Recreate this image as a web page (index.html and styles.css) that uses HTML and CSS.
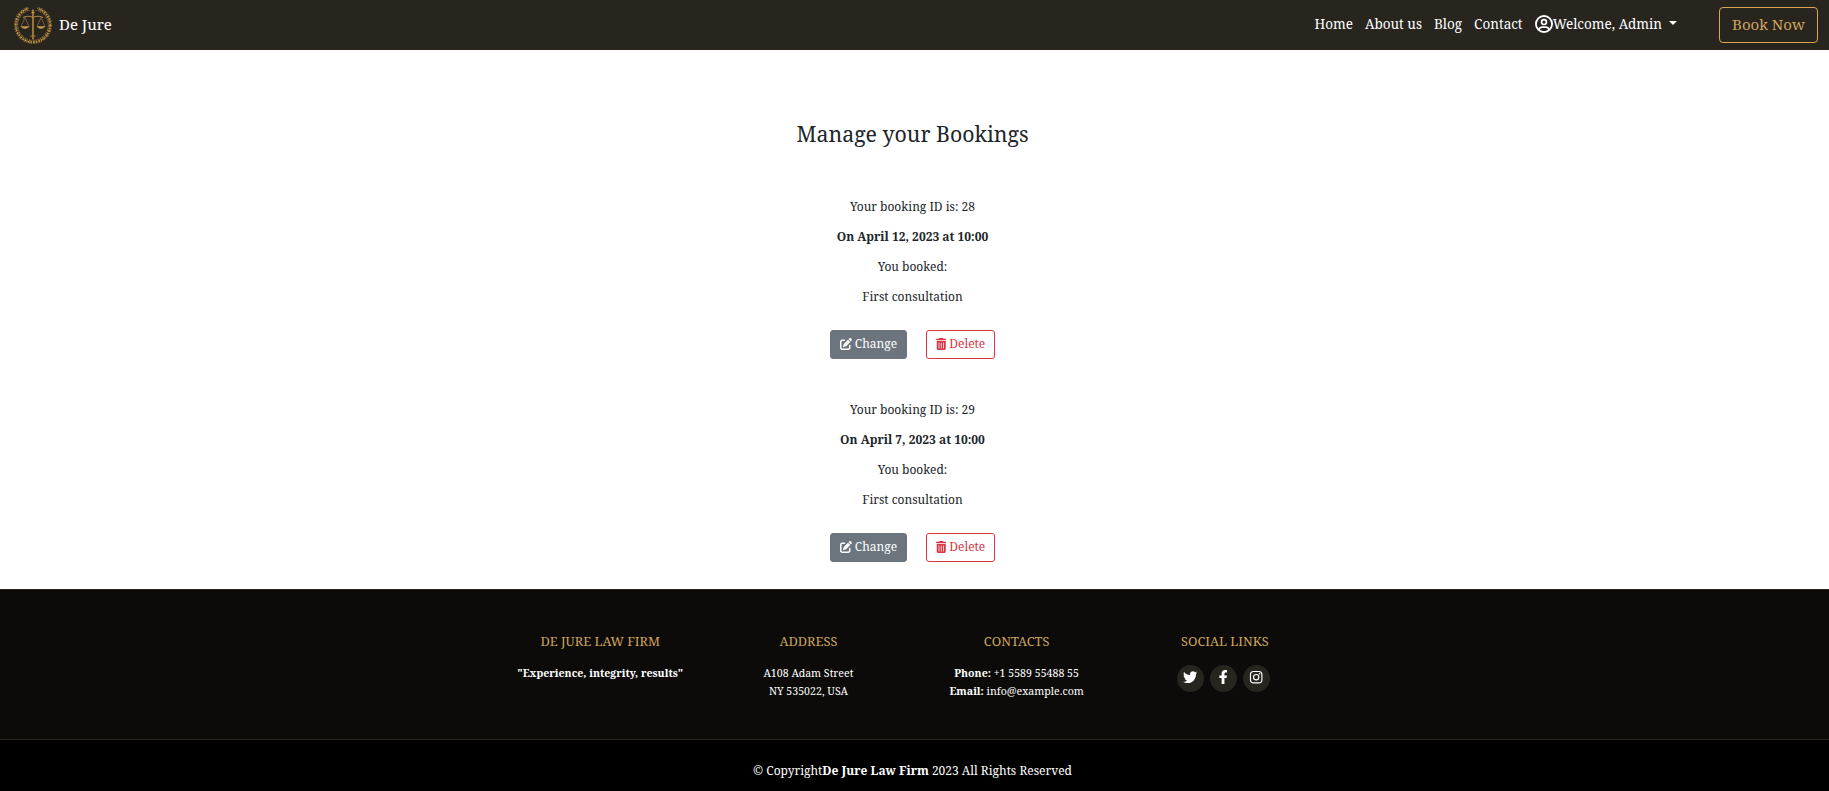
FILE: index.html
```html
<!DOCTYPE html>
<html lang="en">
<head>
<meta charset="utf-8">
<title>De Jure</title>
<link rel="stylesheet" href="styles.css">
</head>
<body>
<svg class="defs" width="0" height="0">
  <symbol id="edit" viewBox="0 0 512 512"><path d="M471.6 21.7c-21.9-21.9-57.3-21.9-79.2 0L362.3 51.7l97.9 97.9 30.1-30.1c21.9-21.9 21.9-57.3 0-79.2L471.6 21.7zm-299.2 220c-6.100 6.100-10.800 13.600-13.500 21.900l-29.600 88.800c-2.900 8.600-.6 18.100 5.800 24.600s15.900 8.700 24.600 5.800l88.800-29.600c8.200-2.700 15.700-7.400 21.900-13.500L437.700 172.300 339.700 74.300 172.400 241.700zM96 64C43 64 0 107 0 160V416c0 53 43 96 96 96H352c53 0 96-43 96-96V320c0-17.700-14.300-32-32-32s-32 14.300-32 32v96c0 17.700-14.300 32-32 32H96c-17.700 0-32-14.300-32-32V160c0-17.700 14.300-32 32-32h96c17.700 0 32-14.300 32-32s-14.300-32-32-32H96z"/></symbol>
  <symbol id="trash" viewBox="0 0 448 512"><path d="M135.2 17.700C140.600 6.800 151.700 0 163.800 0H284.200c12.100 0 23.200 6.800 28.600 17.700L320 32h96c17.700 0 32 14.300 32 32s-14.300 32-32 32H32C14.300 96 0 81.700 0 64S14.300 32 32 32h96l7.200-14.300zM32 128H416V448c0 35.300-28.700 64-64 64H96c-35.300 0-64-28.700-64-64V128zm96 64c-8.800 0-16 7.200-16 16V432c0 8.800 7.200 16 16 16s16-7.200 16-16V208c0-8.800-7.200-16-16-16zm96 0c-8.800 0-16 7.200-16 16V432c0 8.800 7.200 16 16 16s16-7.200 16-16V208c0-8.800-7.200-16-16-16zm96 0c-8.800 0-16 7.200-16 16V432c0 8.800 7.200 16 16 16s16-7.200 16-16V208c0-8.800-7.200-16-16-16z"/></symbol>
</svg>

<header class="navbar">
  <a class="brand">
    <svg class="logo" viewBox="0 0 40 40" fill="none" stroke="#a98243">
      <circle cx="20" cy="20" r="16.900" stroke-width="4.200" stroke-dasharray="2.200 1 1.200 .6" stroke="#80632f" pathLength="110"/>
      <circle cx="20" cy="20" r="17.200" stroke-width="1.200" stroke-dasharray="1.500 1.300" stroke="#c99f52"/>
      <path d="M15.500 0h9v5h-9z" fill="#28251f" stroke="none"/>
      <path d="M20 4.500v30M18.500 7.500h3" stroke-width="1.500" stroke="#c08f3f"/>
      <path d="M10 12.500q5-2.500 10 0q5-2.500 10 0M17.500 31h5" stroke-width="1.100"/>
      <path d="M12 12.500l-4 9h8zM28 12.500l-4 9h8z" stroke-width=".6"/>
      <path d="M7.500 21.500h9q-4.500 4.500-9 0zM23.500 21.500h9q-4.500 4.500-9 0z" fill="#c79a4b" stroke="none"/>
    </svg>
    <span>De Jure</span>
  </a>
  <nav class="links">
    <a>Home</a><a>About us</a><a>Blog</a><a>Contact</a>
    <a class="user"><svg class="usericon" viewBox="0 0 24 24"><path fill="#fff" fill-rule="evenodd" d="M12 0a12 12 0 1 0 0 24a12 12 0 0 0 0-24zM12 2.600a9.400 9.400 0 0 1 7.200 15.400c-.9-2-2.600-3-4.700-3h-5c-2.100 0-3.800 1-4.700 3A9.400 9.400 0 0 1 12 2.600zM12 21.400c-2 0-3.900-.6-5.400-1.700c.2-1.400 1.300-2.400 2.900-2.400h5c1.600 0 2.700 1 2.900 2.400c-1.500 1.100-3.400 1.700-5.400 1.700zM12 5a4.400 4.400 0 1 0 0 8.800a4.400 4.400 0 0 0 0-8.800zM12 7.300a2.100 2.100 0 1 1 0 4.200a2.100 2.100 0 0 1 0-4.200z"/></svg>Welcome, Admin<i class="caret"></i></a>
  </nav>
  <a class="book">Book Now</a>
</header>

<main>
  <h1>Manage your Bookings</h1>
  <section class="booking">
    <p>Your booking ID is: 28</p>
    <p><b>On April 12, 2023 at 10:00</b></p>
    <p>You booked:</p>
    <p>First consultation</p>
    <div class="actions">
      <a class="btn change"><svg class="i-edit"><use href="#edit"/></svg>Change</a>
      <a class="btn delete"><svg class="i-trash"><use href="#trash"/></svg>Delete</a>
    </div>
  </section>
  <section class="booking">
    <p>Your booking ID is: 29</p>
    <p><b>On April 7, 2023 at 10:00</b></p>
    <p>You booked:</p>
    <p>First consultation</p>
    <div class="actions">
      <a class="btn change"><svg class="i-edit"><use href="#edit"/></svg>Change</a>
      <a class="btn delete"><svg class="i-trash"><use href="#trash"/></svg>Delete</a>
    </div>
  </section>
</main>

<footer>
  <div class="columns">
    <div><h4>DE JURE LAW FIRM</h4><p><b>"Experience, integrity, results"</b></p></div>
    <div><h4>ADDRESS</h4><p>A108 Adam Street<br>NY 535022, USA</p></div>
    <div><h4>CONTACTS</h4><p><b>Phone:</b> +1 5589 55488 55<br><b>Email:</b> info@example.com</p></div>
    <div><h4>SOCIAL LINKS</h4>
      <div class="social">
        <a><svg viewBox="0 0 512 512"><path d="M459.370 151.716c.325 4.548.325 9.097.325 13.645 0 138.720-105.583 298.558-298.558 298.558-59.452 0-114.680-17.219-161.137-47.106 8.447.974 16.568 1.299 25.340 1.299 49.055 0 94.213-16.568 130.274-44.832-46.132-.975-84.792-31.188-98.112-72.772 6.498.974 12.995 1.624 19.818 1.624 9.421 0 18.843-1.300 27.614-3.573-48.081-9.747-84.143-51.980-84.143-102.985v-1.299c13.969 7.797 30.214 12.670 47.431 13.319-28.264-18.843-46.781-51.005-46.781-87.391 0-19.492 5.197-37.360 14.294-52.954 51.655 63.675 129.300 105.258 216.365 109.807-1.624-7.797-2.599-15.918-2.599-24.040 0-57.828 46.782-104.934 104.934-104.934 30.213 0 57.502 12.670 76.670 33.137 23.715-4.548 46.456-13.320 66.599-25.340-7.798 24.366-24.366 44.833-46.132 57.827 21.117-2.273 41.584-8.122 60.426-16.243-14.292 20.791-32.161 39.308-52.628 54.253z"/></svg></a>
        <a><svg viewBox="0 0 320 512"><path d="M279.140 288l14.220-92.660h-88.910v-60.130c0-25.350 12.420-50.060 52.240-50.060h40.420V6.260S260.430 0 225.360 0c-73.220 0-121.080 44.380-121.080 124.720v70.620H22.890V288h81.390v224h100.170V288z"/></svg></a>
        <a><svg class="i-insta" viewBox="0 0 448 512"><path fill-rule="evenodd" d="M130 32h188A130 130 0 0 1 448 162v188a130 130 0 0 1-130 130H130A130 130 0 0 1 0 350V162A130 130 0 0 1 130 32zm4 41a92 92 0 0 0-92 92v182a92 92 0 0 0 92 92h180a92 92 0 0 0 92-92V165a92 92 0 0 0-92-92zM224 141a115 115 0 1 1 0 230a115 115 0 0 1 0-230zm0 40a75 75 0 1 0 0 150a75 75 0 0 0 0-150zM343.500 109.500a27 27 0 1 1 0 54a27 27 0 0 1 0-54z"/></svg></a>
      </div>
    </div>
  </div>
  <div class="copyright">© Copyright<b>De Jure Law Firm</b> 2023 All Rights Reserved</div>
</footer>
</body>
</html>
```

FILE: styles.css
```css
* { box-sizing: border-box; }
body { margin: 0; font: 12px/18px "Noto Serif", "DejaVu Serif Condensed", serif; color: #212529; background: #fff; }
h1, h4, p { margin: 0; }
.defs { display: block; position: absolute; }
.navbar { height: 50px; background: #28251f; color: #fff; display: flex; align-items: center; padding: 0 11px 0 13px; }
.brand { display: flex; align-items: center; gap: 6px; font-size: 15px; margin-right: auto; }
.logo { width: 40px; height: 40px; }
.brand span { padding-bottom: 2px; }
.links { display: flex; gap: 12px; font-size: 13.5px; padding-bottom: 2px; margin-right: 42px; }
.user { display: flex; align-items: center; }
.usericon { width: 18px; height: 18px; margin-top: -1px; }
.caret { margin: -3px 0 0 7px; border: 4px solid transparent; border-top-color: #fff; border-bottom: 0; }
.book { width: 99px; height: 36px; border: 1px solid #d9a750; border-radius: 4px; color: #cda45e; font-size: 15px; line-height: 33px; text-align: center; }
main { height: 539px; text-align: center; padding: 68px 4px 0 0; }
h1 { font-size: 21.3px; line-height: 32px; font-weight: 400; margin-bottom: 48px; }
.booking { height: 203px; }
.booking p { margin-bottom: 12px; }
.actions { display: flex; justify-content: center; gap: 19px; padding-top: 12px; }
.btn { height: 29px; border: 1px solid; border-radius: 3px; display: flex; align-items: center; justify-content: center; padding-bottom: 1px; }
.btn svg { fill: currentColor; height: 12px; margin-right: 3px; }
.change { width: 77px; background: #6c757d; border-color: #6c757d; color: #fff; }
.delete { width: 69px; color: #dc3545; }
.i-edit { width: 12px; }
.i-trash { width: 10.500px; }
footer { height: 202px; background: #000; color: #fff; text-align: center; }
.columns { height: 151px; background: #0c0b09; border-top: 1px solid #28251f; border-bottom: 1px solid #28251f; padding: 42px 4px 0 0; display: grid; grid-template-columns: repeat(4, 208.200px); justify-content: center; font-size: 10.600px; }
.columns h4 { font-size: 12.800px; font-weight: 400; line-height: 18px; color: #cda45e; margin-bottom: 14px; }
.social { display: flex; justify-content: center; gap: 6px; padding: 1px 3px 0 0; }
.social a { width: 27px; height: 27px; border-radius: 50%; background: #28251f; display: flex; justify-content: center; padding-top: 5px; }
.social svg { height: 14.400px; width: 14.400px; fill: #fff; }
.copyright { padding: 22px 4px 0 0; }
```
